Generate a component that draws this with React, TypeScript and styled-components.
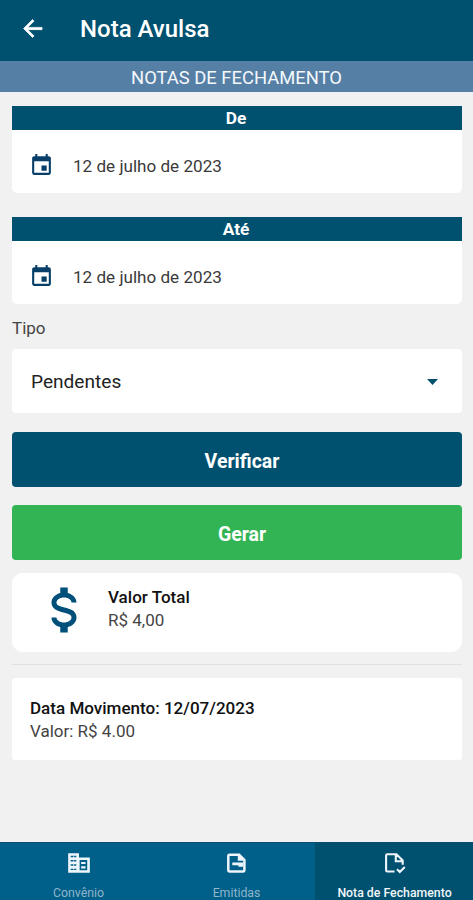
import React from "react";
import styled, { createGlobalStyle } from "styled-components";

const GlobalStyle = createGlobalStyle`
  * { box-sizing: border-box; }
  body { margin: 0; background: #f1f1f1; font-family: Roboto, "Liberation Sans", sans-serif; }
`;

const navy = "#00506f";

const Screen = styled.div`
  width: 473px;
  height: 900px;
  display: flex;
  flex-direction: column;
  overflow: hidden;
  background: #f1f1f1;
`;

const Header = styled.header`
  height: 61px;
  flex: none;
  display: flex;
  align-items: center;
  padding: 0 0 4px 19px;
  gap: 34px;
  background: ${navy};
  color: #fff;
`;

const Title = styled.h1`
  margin: 0;
  font-size: 24px;
  line-height: 28px;
  font-weight: 500;
`;

const Subtitle = styled.div`
  height: 31px;
  flex: none;
  line-height: 31px;
  padding-top: 1px;
  text-align: center;
  background: #567fa6;
  color: #f4f8fb;
  font-size: 18.4px;
`;

const Content = styled.main`
  flex: 1;
  display: flex;
  flex-direction: column;
  padding: 14px 11px 0 12px;
`;

const DateFields = styled.div`
  display: flex;
  flex-direction: column;
  gap: 24px;
  margin-bottom: 14px;
`;

const DateField = styled.section`
  height: 87px;
  background: #fff;
  border-radius: 0 0 5px 5px;
`;

const DateLabel = styled.div`
  height: 24px;
  line-height: 24px;
  padding-right: 2px;
  text-align: center;
  background: ${navy};
  color: #fff;
  font-size: 17.3px;
  font-weight: 700;
`;

const DateRow = styled.div`
  height: 63px;
  display: flex;
  align-items: center;
  gap: 19px;
  padding: 8px 0 0 17px;
  color: #3a3a3a;
  font-size: 17.1px;
`;

const FieldLabel = styled.div`
  height: 21px;
  margin-bottom: 10px;
  line-height: 21px;
  color: #444;
  font-size: 17px;
`;

const Select = styled.div`
  height: 64px;
  flex: none;
  display: flex;
  align-items: center;
  justify-content: space-between;
  margin-bottom: 1px;
  padding: 1px 24px 0 19px;
  background: #fff;
  border-radius: 4px;
  color: #222;
  font-size: 19.1px;
`;

const Button = styled.button<{ $color: string }>`
  height: 55px;
  flex: none;
  margin-top: 18px;
  border: 0;
  padding: 3px 0 0 10px;
  border-radius: 4px;
  background: ${(p) => p.$color};
  color: #fff;
  font: 700 19.5px Roboto, sans-serif;
`;

const TotalCard = styled.section`
  height: 79px;
  flex: none;
  display: flex;
  align-items: flex-start;
  margin-top: 13px;
  padding: 7px 0 0 22px;
  gap: 14px;
  background: #fff;
  border-radius: 11px;
`;

const Lines = styled.div`
  display: flex;
  flex-direction: column;
  padding-top: 5px;
`;

const Strong = styled.span`
  line-height: 24px;
  color: #111;
  font-size: 17.05px;
  font-weight: 500;
`;

const Amount = styled.span`
  line-height: 23px;
  color: #444;
  font-size: 17px;
`;

const Divider = styled.hr`
  width: 100%;
  height: 1px;
  flex: none;
  margin: 12px 0 13px;
  border: 0;
  background: #dfe2e2;
`;

const EntryCard = styled.section`
  height: 82px;
  flex: none;
  padding: 13px 0 0 18px;
  background: #fff;
  border-radius: 3px;
`;

const TabBar = styled.nav`
  height: 58px;
  flex: none;
  display: grid;
  grid-template-columns: 157px 158px 158px;
  background: #00608a;
  border-top: 1px solid #0a4f70;
`;

const Tab = styled.div<{ $active?: boolean }>`
  display: flex;
  flex-direction: column;
  align-items: center;
  padding-top: 7px;
  gap: 9px;
  background: ${(p) => (p.$active ? navy : "transparent")};
  color: ${(p) => (p.$active ? "#f2f7fa" : "#8fb5ca")};
  font-size: 12.3px;
  line-height: 16px;
  font-weight: ${(p) => (p.$active ? 500 : 400)};
  white-space: nowrap;

  &:not(:first-child) {
    padding-left: 1px;
  }
`;

function DateBlock({ label, value }: { label: string; value: string }) {
  return (
    <DateField>
      <DateLabel>{label}</DateLabel>
      <DateRow>
        <svg width="25" height="25" viewBox="0 0 24 24" fill="#073f68">
          <path d="M17 12h-5v5h5v-5zM16 1v2H8V1H6v2H5c-1.11 0-1.99.9-1.99 2L3 19c0 1.1.89 2 2 2h14c1.1 0 2-.9 2-2V5c0-1.1-.9-2-2-2h-1V1h-2zm3 18H5V8h14v11z" />
        </svg>
        <span>{value}</span>
      </DateRow>
    </DateField>
  );
}

export default function App() {
  return (
    <>
      <GlobalStyle />
      <Screen>
        <Header>
          <svg width="27" height="27" viewBox="0 0 24 24" fill="#fff" stroke="#fff" strokeWidth=".6">
            <path d="M20.5 11H7.83l5.59-5.59L12 4l-8 8 8 8 1.41-1.41L7.83 13H20.5v-2z" />
          </svg>
          <Title>Nota Avulsa</Title>
        </Header>
        <Subtitle>NOTAS DE FECHAMENTO</Subtitle>
        <Content>
          <DateFields>
            <DateBlock label="De" value="12 de julho de 2023" />
            <DateBlock label="Até" value="12 de julho de 2023" />
          </DateFields>
          <FieldLabel>Tipo</FieldLabel>
          <Select>
            <span>Pendentes</span>
            <svg width="11" height="6" viewBox="0 0 11 6" fill={navy}>
              <path d="M0 0h11L5.5 6z" />
            </svg>
          </Select>
          <Button $color={navy}>Verificar</Button>
          <Button $color="#32b454">Gerar</Button>
          <TotalCard>
            <svg width="60" height="60" viewBox="0 0 24 24" fill="#005079">
              <path d="M7 15h2c0 1.08 1.37 2 3 2s3-.92 3-2c0-1.1-1.04-1.5-3.24-2.03C9.64 12.44 7 11.78 7 9c0-1.79 1.47-3.31 3.5-3.82V3h3v2.18C15.53 5.69 17 7.21 17 9h-2c0-1.08-1.37-2-3-2s-3 .92-3 2c0 1.1 1.04 1.5 3.24 2.03C14.36 11.56 17 12.22 17 15c0 1.79-1.47 3.31-3.5 3.82V21h-3v-2.18C8.47 18.31 7 16.79 7 15z" />
            </svg>
            <Lines>
              <Strong>Valor Total</Strong>
              <Amount>R$ 4,00</Amount>
            </Lines>
          </TotalCard>
          <Divider />
          <EntryCard>
            <Lines>
              <Strong>Data Movimento: 12/07/2023</Strong>
              <Amount>Valor: R$ 4.00</Amount>
            </Lines>
          </EntryCard>
        </Content>
        <TabBar>
          <Tab>
            <svg width="26" height="26" viewBox="0 0 24 24" fill="#eef5fb">
              <path
                fillRule="evenodd"
                d="M12 7V3H2v18h20V7zM4.3 5.4h5.2v1.3H4.3zM4.3 9.2h5.2v1.3H4.3zM4.3 13.2h5.2v1.3H4.3zM4.3 17.2h5.2v1.3H4.3zM12.6 9.2h7v9.6h-7z"
              />
              <path d="M14 11h4v2h-4zM14 15h4v2h-4z" />
              <path d="M6.5 5h1v14h-1z" opacity=".6" />
            </svg>
            Convênio
          </Tab>
          <Tab>
            <svg width="26" height="26" viewBox="0 0 26 26" fill="none">
              <path d="M5.6 4.7h9.5l5.3 5.3v10.1a1.3 1.3 0 0 1-1.3 1.3H5.6a1.3 1.3 0 0 1-1.3-1.3V6a1.3 1.3 0 0 1 1.3-1.3z" stroke="#eef5fb" strokeWidth="2.5" />
              <path d="M13.8 4v6.7h6.4L15 4zM8.3 12.6H19v4.2h-4.6v-1.6H8.3z" fill="#eef5fb" />
            </svg>
            Emitidas
          </Tab>
          <Tab $active>
            <svg width="26" height="26" viewBox="0 0 26 26" fill="none" stroke="#eef5fb" strokeWidth="2.1">
              <path d="M12.5 21.5H5.3a1.2 1.2 0 0 1-1.2-1.2V5.4a1.2 1.2 0 0 1 1.2-1.2h9.2l6.2 6.2v4.3M13.8 4.2v7h7M15 19.3l2.8 2.8 5-5" />
            </svg>
            Nota de Fechamento
          </Tab>
        </TabBar>
      </Screen>
    </>
  );
}
